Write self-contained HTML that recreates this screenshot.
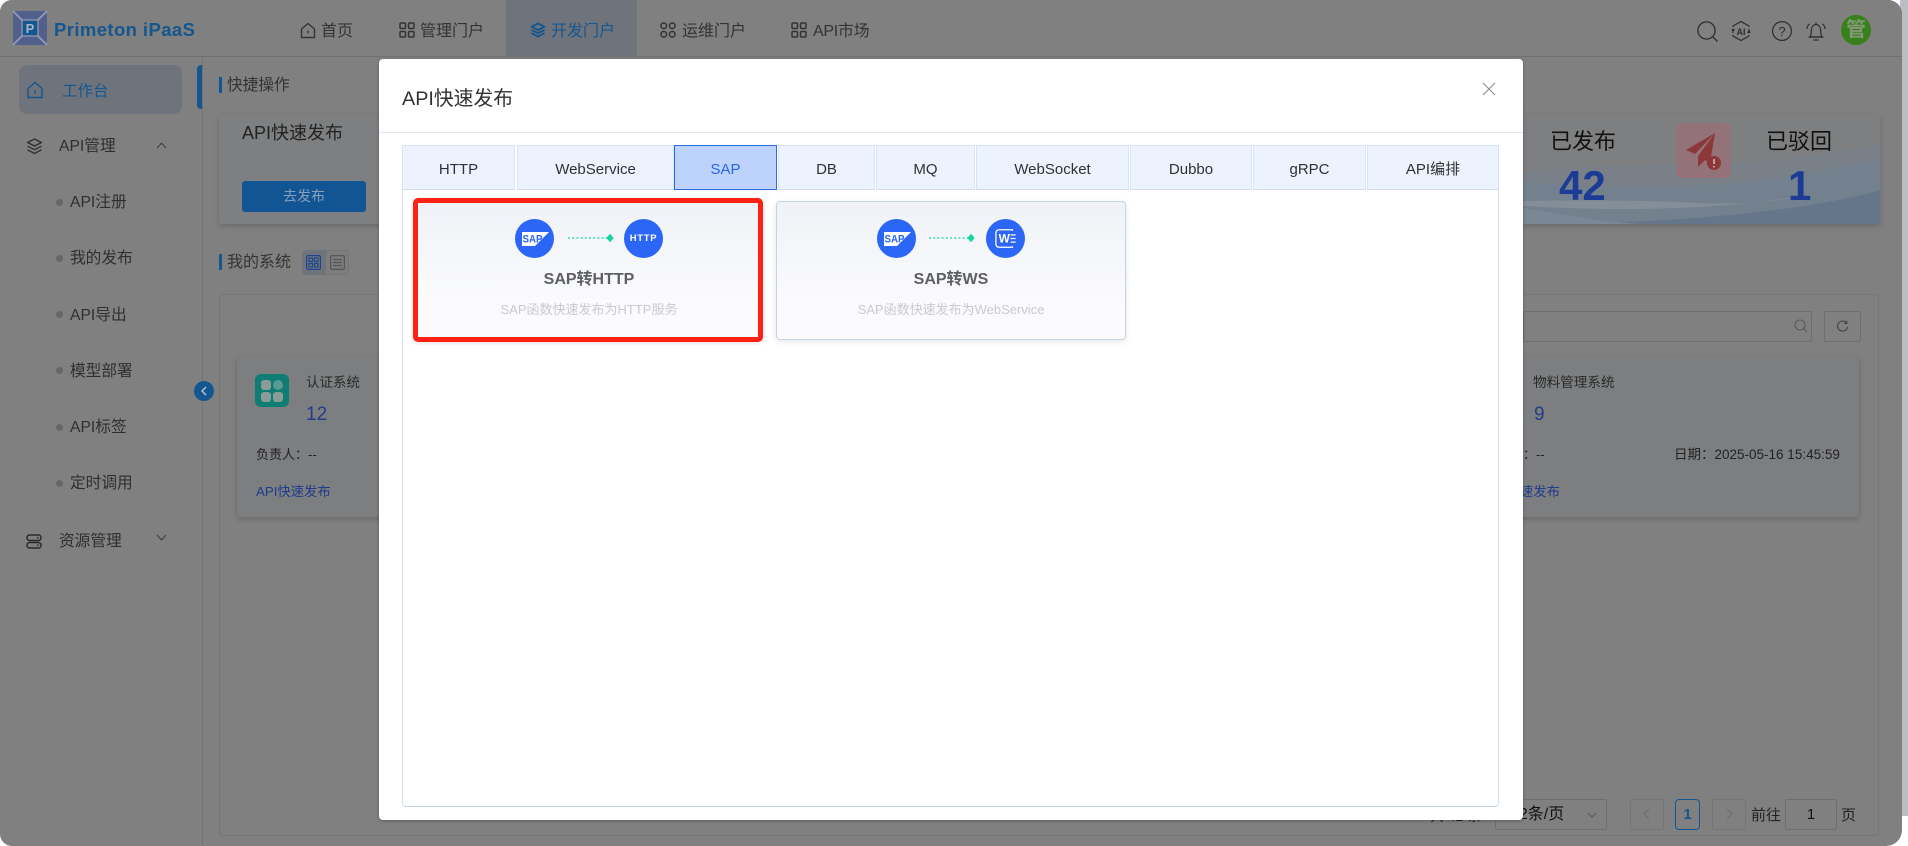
<!DOCTYPE html>
<html lang="zh">
<head>
<meta charset="utf-8">
<title>API快速发布</title>
<style>
*{box-sizing:border-box}
html,body{margin:0;padding:0;width:1908px;height:846px;overflow:hidden;background:#fff;font-family:"Liberation Sans","Noto Sans CJK SC",sans-serif}
.strip{position:absolute;left:1900px;top:0;width:8px;height:816px;background:#bcbcc4}
#win{position:absolute;left:0;top:0;width:1902px;height:846px;background:#808080;border-radius:12px 14px 16px 12px;overflow:hidden;color:#2c2c2c}
.t{position:absolute;white-space:nowrap;line-height:20px}
.b{position:absolute}
svg{position:absolute;overflow:visible}
.nav{font-size:16px;color:#333;top:22px}
.side{font-size:15.7px;color:#2f2f2f}
.dot{position:absolute;left:56px;width:7px;height:7px;border-radius:50%;background:#666}
#modal{position:absolute;left:379px;top:59px;width:1144px;height:761px;background:#fff;border-radius:4px;box-shadow:0 1px 3px rgba(0,0,0,.3);color:#303133}
.tab{position:absolute;top:86px;height:45px;background:#ecf3fe;border:1px solid #d8e3f3;border-bottom:1px solid #d0dcee;font-size:15px;line-height:47px;text-align:center;color:#303133}
.card{position:absolute;background:linear-gradient(#eff2f7,#fbfbfd 75%);border-radius:4px}
.circle{position:absolute;width:39px;height:39px;border-radius:50%;background:#2b66f6}
</style>
</head>
<body>
<div class="strip"></div>
<div id="win">
  <!-- header -->
  <div class="b" style="left:0;top:0;width:1902px;height:57px;background:#7f807f;border-bottom:1px solid #6f7070"></div>
  <svg style="left:13px;top:11px" width="34" height="34" viewBox="0 0 34 34">
    <rect x="0" y="0" width="34" height="34" rx="3" fill="#505f8c"/>
    <path d="M0 0L10 10M34 0L24 10M0 34L10 24M34 34L24 24" stroke="#8d96ad" stroke-width="2"/>
    <rect x="9" y="9" width="16" height="16" fill="#14568f"/>
    <rect x="9" y="9" width="16" height="16" fill="none" stroke="#8d96ad" stroke-width="1.4"/>
    <text x="17" y="22" font-size="13" font-weight="700" text-anchor="middle" fill="#a9b4c6" font-family="Liberation Sans">P</text>
  </svg>
  <div class="t" style="left:54px;top:19px;font-size:18.5px;font-weight:700;color:#14568f;letter-spacing:.4px;line-height:22px">Primeton iPaaS</div>

  <div class="b" style="left:506px;top:0;width:131px;height:56px;background:#6f747c"></div>
  <svg style="left:300px;top:22px" width="16" height="17" viewBox="0 0 16 17" fill="none" stroke="#333" stroke-width="1.4"><path d="M1.5 7L8 1.5L14.5 7V15.5H1.5Z" stroke-linejoin="round"/><path d="M8 8.5V11.5"/></svg>
  <div class="t nav" style="left:321px">首页</div>
  <svg style="left:399px;top:22px" width="16" height="16" viewBox="0 0 16 16" fill="none" stroke="#333" stroke-width="1.5"><rect x="1" y="1" width="5.5" height="5.5" rx="1.2"/><rect x="9.5" y="1" width="5.5" height="5.5" rx="1.2"/><rect x="1" y="9.5" width="5.5" height="5.5" rx="1.2"/><rect x="9.5" y="9.5" width="5.5" height="5.5" rx="1.2"/></svg>
  <div class="t nav" style="left:420px">管理门户</div>
  <svg style="left:530px;top:22px" width="16" height="16" viewBox="0 0 16 16" fill="none" stroke="#14568f" stroke-width="1.9"><path d="M8 1.5L14.5 4.7L8 8L1.5 4.7Z" stroke-linejoin="round"/><path d="M1.5 8L8 11.2L14.5 8M1.5 11.2L8 14.5L14.5 11.2"/></svg>
  <div class="t nav" style="left:551px;color:#14568f">开发门户</div>
  <svg style="left:660px;top:22px" width="16" height="16" viewBox="0 0 16 16" fill="none" stroke="#333" stroke-width="1.5"><rect x="1" y="1" width="5.5" height="5.5" rx="2.5"/><rect x="9.5" y="1" width="5.5" height="5.5" rx="2.5"/><rect x="1" y="9.5" width="5.5" height="5.5" rx="2.5"/><rect x="9.5" y="9.5" width="5.5" height="5.5" rx="2.5"/></svg>
  <div class="t nav" style="left:682px">运维门户</div>
  <svg style="left:791px;top:22px" width="16" height="16" viewBox="0 0 16 16" fill="none" stroke="#333" stroke-width="1.5"><rect x="1" y="1" width="5.5" height="5.5" rx="1.2"/><rect x="9.5" y="1" width="5.5" height="5.5" rx="1.2"/><rect x="1" y="9.5" width="5.5" height="5.5" rx="1.2"/><rect x="9.5" y="9.5" width="5.5" height="5.5" rx="1.2"/></svg>
  <div class="t nav" style="left:813px;letter-spacing:-.3px">API市场</div>

  <!-- header right icons -->
  <svg style="left:1697px;top:21px" width="22" height="22" viewBox="0 0 22 22" fill="none" stroke="#2d2d2d" stroke-width="1.3"><circle cx="9.5" cy="9.5" r="8.6"/><path d="M15.8 15.8L20.5 20.5"/></svg>
  <svg style="left:1731px;top:20px" width="20" height="22" viewBox="0 0 20 22" fill="none" stroke="#2d2d2d" stroke-width="1.2"><path d="M2 7V6L10 1.5L18 6V7M18 15V16L10 20.5L2 16V15"/><path d="M.8 9L2 11L3.4 9M16.6 13L18 11L19.2 13"/><path d="M2 9V13M18 9V13"/><text x="10" y="15" font-size="9" font-weight="700" text-anchor="middle" fill="#2d2d2d" stroke="none" font-family="Liberation Sans">AI</text></svg>
  <svg style="left:1772px;top:21px" width="20" height="20" viewBox="0 0 20 20" fill="none" stroke="#2d2d2d" stroke-width="1.2"><circle cx="10" cy="10" r="9.4"/><text x="10" y="15" font-size="13" text-anchor="middle" fill="#2d2d2d" stroke="none" font-family="Liberation Sans">?</text></svg>
  <svg style="left:1806px;top:21px" width="20" height="22" viewBox="0 0 20 22" fill="none" stroke="#2d2d2d" stroke-width="1.2"><path d="M4 16C5.5 14 5 11 5.5 8C6 5 8 3.5 10 3.5C12 3.5 14 5 14.5 8C15 11 14.5 14 16 16Z" stroke-linejoin="round"/><path d="M10 1.5V3.5M7.5 19H12.5M2.5 16H17.5M1 8C1.2 6 2 4 3.5 3M19 8C18.8 6 18 4 16.5 3"/></svg>
  <div class="b" style="left:1841px;top:15px;width:30px;height:30px;border-radius:50%;background:#38801a;color:#849878;font-size:20px;line-height:30px;text-align:center;font-weight:700">管</div>

  <!-- sidebar -->
  <div class="b" style="left:202px;top:57px;width:1px;height:789px;background:#727272"></div>
  <div class="b" style="left:19px;top:65px;width:163px;height:49px;border-radius:8px;background:#6f747c"></div>
  <div class="b" style="left:197px;top:65px;width:5px;height:44px;border-radius:4px 0 0 4px;background:#14568f"></div>
  <svg style="left:27px;top:81px" width="16" height="18" viewBox="0 0 16 18" fill="none" stroke="#14568f" stroke-width="1.4"><path d="M1 7.5L8 1.5L15 7.5V16.5H1Z" stroke-linejoin="round"/><path d="M8 9V12.5"/></svg>
  <div class="t" style="left:62px;top:82px;font-size:15.5px;color:#14568f">工作台</div>

  <svg style="left:26px;top:138px" width="17" height="17" viewBox="0 0 17 17" fill="none" stroke="#2f2f2f" stroke-width="1.3"><path d="M8.5 1L15.5 4.5L8.5 8L1.5 4.5Z" stroke-linejoin="round"/><path d="M1.5 8.2L8.5 11.7L15.5 8.2M1.5 11.8L8.5 15.5L15.5 11.8"/></svg>
  <div class="t side" style="left:59px;top:137px">API管理</div>
  <svg style="left:156px;top:142px" width="11" height="7" viewBox="0 0 11 7" fill="none" stroke="#3a3a3a"><path d="M1 6L5.5 1.2L10 6"/></svg>

  <div class="dot" style="top:199px"></div><div class="t side" style="left:70px;top:193px">API注册</div>
  <div class="dot" style="top:255px"></div><div class="t side" style="left:70px;top:249px">我的发布</div>
  <div class="dot" style="top:311px"></div><div class="t side" style="left:70px;top:306px">API导出</div>
  <div class="dot" style="top:367px"></div><div class="t side" style="left:70px;top:362px">模型部署</div>
  <div class="dot" style="top:424px"></div><div class="t side" style="left:70px;top:418px">API标签</div>
  <div class="dot" style="top:480px"></div><div class="t side" style="left:70px;top:474px">定时调用</div>

  <svg style="left:26px;top:534px" width="16" height="15" viewBox="0 0 16 15" fill="none" stroke="#2a2a2a" stroke-width="1.5"><rect x="1" y="1" width="14" height="5.5" rx="2.5"/><rect x="1" y="8.5" width="14" height="5.5" rx="2.5"/><path d="M11 3.8H12.5M11 11.2H12.5"/></svg>
  <div class="t side" style="left:59px;top:532px">资源管理</div>
  <svg style="left:156px;top:534px" width="11" height="7" viewBox="0 0 11 7" fill="none" stroke="#3a3a3a"><path d="M1 1L5.5 6L10 1"/></svg>

  <div class="b" style="left:194px;top:381px;width:20px;height:20px;border-radius:50%;background:#14568f"></div>
  <svg style="left:200px;top:386px" width="8" height="10" viewBox="0 0 8 10" fill="none" stroke="#b9c8d8" stroke-width="1.4"><path d="M6 1L2 5L6 9"/></svg>

  <!-- main -->
  <div class="b" style="left:219px;top:77px;width:3px;height:16px;background:#14568f"></div>
  <div class="t" style="left:227px;top:76px;font-size:15.7px;color:#333">快捷操作</div>

  <div class="b" style="left:219px;top:115px;width:1661px;height:109px;background:#7e7f80;box-shadow:0 2px 6px rgba(0,0,0,.18);border-radius:3px;overflow:hidden"></div>
  <svg style="left:0;top:0" width="1902" height="846">
    <defs><clipPath id="bn"><rect x="1523" y="115" width="357" height="109"/></clipPath></defs>
    <g clip-path="url(#bn)">
      <rect x="1523" y="115" width="357" height="109" fill="#7e7f80"/>
      <path d="M1523 172C1600 158 1750 176 1880 142V224H1523Z" fill="#7a8087"/>
      <path d="M1523 182C1600 186 1720 198 1880 158V224H1523Z" fill="#73808d"/>
      <path d="M1523 206C1620 212 1760 212 1880 180C1790 202 1750 205 1700 203C1640 200 1580 200 1523 201Z" fill="#838e99"/>
      <path d="M1560 224C1700 222 1820 208 1880 190V224Z" fill="#65768a"/>
      <path d="M1523 208C1560 214 1600 222 1640 224H1523Z" fill="#7a8794"/>
    </g>
  </svg>
  <div class="t" style="left:242px;top:123px;font-size:18px;color:#222">API快速发布</div>
  <div class="b" style="left:242px;top:181px;width:124px;height:31px;border-radius:3px;background:#115595;color:#8aa0b8;font-size:14px;line-height:31px;text-align:center">去发布</div>

  <div class="t" style="left:1550px;top:128px;font-size:22px;line-height:28px;color:#111">已发布</div>
  <div class="t" style="left:1559px;top:164px;font-size:42px;font-weight:700;line-height:44px;color:#1c3b94">42</div>
  <div class="b" style="left:1676px;top:123px;width:55px;height:55px;border-radius:5px;background:#94727a"></div>
  <svg style="left:1685px;top:132px" width="42" height="40" viewBox="0 0 42 40">
    <path d="M30 1L1 18L10 22L30 1L13 24L13 35L20 28L25 31Z" fill="#8c3838"/>
    <circle cx="29" cy="31" r="7" fill="#8c3838"/>
    <path d="M29 27V32M29 34V35.5" stroke="#c8a7a7" stroke-width="1.8"/>
  </svg>
  <div class="t" style="left:1766px;top:128px;font-size:22px;line-height:28px;color:#111">已驳回</div>
  <div class="t" style="left:1788px;top:164px;font-size:42px;font-weight:700;line-height:44px;color:#1c3b94">1</div>

  <div class="b" style="left:219px;top:254px;width:3px;height:16px;background:#14568f"></div>
  <div class="t" style="left:227px;top:253px;font-size:16px;color:#333">我的系统</div>
  <div class="b" style="left:302px;top:250px;width:47px;height:25px;border-radius:4px;border:1px solid #757575;background:#7d7d7d"></div>
  <div class="b" style="left:302px;top:250px;width:24px;height:25px;border-radius:4px 0 0 4px;background:#6f747c"></div>
  <svg style="left:306px;top:255px" width="15" height="15" viewBox="0 0 15 15" fill="none" stroke="#1c4590" stroke-width="1.2"><rect x=".6" y=".6" width="13.8" height="13.8" rx="1.5"/><rect x="3" y="3" width="3.5" height="3.5"/><rect x="8.5" y="3" width="3.5" height="3.5"/><rect x="3" y="8.5" width="3.5" height="3.5"/><rect x="8.5" y="8.5" width="3.5" height="3.5"/></svg>
  <svg style="left:330px;top:255px" width="15" height="15" viewBox="0 0 15 15" fill="none" stroke="#555" stroke-width="1.2"><rect x=".6" y=".6" width="13.8" height="13.8" rx="1.5"/><path d="M3 4.5H12M3 7.5H12M3 10.5H12"/></svg>

  <div class="b" style="left:219px;top:294px;width:1660px;height:542px;border:1px solid #767676;border-radius:4px"></div>

  <div class="b" style="left:1523px;top:311px;width:289px;height:31px;border:1px solid #6f6f6f;border-radius:2px"></div>
  <svg style="left:1794px;top:319px" width="14" height="14" viewBox="0 0 14 14" fill="none" stroke="#5a5a5a" stroke-width="1.1"><circle cx="6" cy="6" r="5"/><path d="M10 10L13 13"/></svg>
  <div class="b" style="left:1824px;top:311px;width:37px;height:31px;border:1px solid #6f6f6f;border-radius:2px"></div>
  <svg style="left:1836px;top:320px" width="13" height="13" viewBox="0 0 13 13" fill="none" stroke="#444" stroke-width="1.1"><path d="M10.5 3A5 5 0 1 0 11.5 7"/><path d="M10.8 .8V3.4H8.2"/></svg>

  <!-- system cards -->
  <div class="b" style="left:237px;top:356px;width:1622px;height:161px;background:#7c7e80;border-radius:3px;box-shadow:0 2px 6px rgba(0,0,0,.2)"></div>
  <div class="b" style="left:255px;top:374px;width:34px;height:33px;border-radius:6px;background:#0f7d74"></div>
  <svg style="left:255px;top:374px" width="34" height="33" viewBox="0 0 34 33"><rect x="6" y="6" width="10" height="10" rx="3" fill="#8a9c9a"/><circle cx="23" cy="11" r="5" fill="#5a9a94"/><rect x="6" y="18" width="10" height="10" rx="3" fill="#8a9c9a"/><rect x="18" y="18" width="10" height="10" rx="3" fill="#8a9c9a"/></svg>
  <div class="t" style="left:306px;top:373px;font-size:13.5px;color:#2a2a2a">认证系统</div>
  <div class="t" style="left:306px;top:405px;font-size:19px;color:#223b8a">12</div>
  <div class="t" style="left:256px;top:445px;font-size:13px;color:#222">负责人：--</div>
  <div class="t" style="left:256px;top:482px;font-size:13.3px;color:#1e3b8c">API快速发布</div>

  <div class="t" style="left:1533px;top:373px;font-size:13.6px;color:#2a2a2a">物料管理系统</div>
  <div class="t" style="left:1534px;top:405px;font-size:19px;color:#223b8a">9</div>
  <div class="t" style="left:1523px;top:445px;font-size:13px;color:#222">：--</div>
  <div class="t" style="left:1674px;top:445px;font-size:13.5px;color:#222">日期：2025-05-16 15:45:59</div>
  <div class="t" style="left:1520px;top:482px;font-size:13.3px;color:#1e3b8c">速发布</div>

  <!-- pagination -->
  <div class="t" style="left:1430px;top:806px;font-size:14px;color:#222">共 42 条</div>
  <div class="b" style="left:1495px;top:799px;width:112px;height:31px;border:1px solid #6f6f6f;border-radius:2px"></div>
  <div class="t" style="left:1510px;top:805px;font-size:16px;color:#111">12条/页</div>
  <svg style="left:1587px;top:812px" width="10" height="6" viewBox="0 0 10 6" fill="none" stroke="#555"><path d="M1 1L5 5L9 1"/></svg>
  <div class="b" style="left:1630px;top:799px;width:34px;height:31px;border:1px solid #757575;border-radius:2px"></div>
  <svg style="left:1643px;top:808px" width="7" height="12" viewBox="0 0 7 12" fill="none" stroke="#6c6c6c"><path d="M6 1L1 6L6 11"/></svg>
  <div class="b" style="left:1675px;top:799px;width:25px;height:31px;border:1px solid #14568f;border-radius:4px;color:#14568f;font-size:15px;font-weight:700;line-height:29px;text-align:center">1</div>
  <div class="b" style="left:1712px;top:799px;width:34px;height:31px;border:1px solid #757575;border-radius:2px"></div>
  <svg style="left:1726px;top:808px" width="7" height="12" viewBox="0 0 7 12" fill="none" stroke="#6c6c6c"><path d="M1 1L6 6L1 11"/></svg>
  <div class="t" style="left:1751px;top:806px;font-size:15px;color:#222">前往</div>
  <div class="b" style="left:1785px;top:799px;width:52px;height:31px;border:1px solid #6f6f6f;border-radius:2px;font-size:15px;line-height:29px;text-align:center;color:#111">1</div>
  <div class="t" style="left:1841px;top:806px;font-size:15px;color:#222">页</div>

  <!-- modal -->
  <div id="modal">
    <div class="t" style="left:23px;top:29px;font-size:19.8px;line-height:22px;color:#303133">API快速发布</div>
    <svg style="left:1103px;top:23px" width="14" height="14" viewBox="0 0 14 14" fill="none" stroke="#909399" stroke-width="1.2"><path d="M1 1L13 13M13 1L1 13"/></svg>
    <div class="b" style="left:0;top:73px;width:1144px;height:1px;background:#e6e8ee"></div>

    <div class="b" style="left:23px;top:131px;width:1097px;height:617px;border:1px solid #d3deee;border-top:0;border-bottom:1px solid #c5d1e4;border-radius:0 0 4px 4px"></div>

    <div class="tab" style="left:23px;width:113px">HTTP</div>
    <div class="tab" style="left:138px;width:157px">WebService</div>
    <div class="tab" style="left:295px;width:103px;background:#bed3fc;border:1px solid #2f6be0;color:#2b64ee">SAP</div>
    <div class="tab" style="left:399px;width:97px">DB</div>
    <div class="tab" style="left:497px;width:99px">MQ</div>
    <div class="tab" style="left:597px;width:153px">WebSocket</div>
    <div class="tab" style="left:751px;width:122px">Dubbo</div>
    <div class="tab" style="left:874px;width:113px">gRPC</div>
    <div class="tab" style="left:988px;width:132px">API编排</div>

    <!-- card 1 -->
    <div class="card" style="left:34px;top:139px;width:350px;height:144px;border:5px solid #ff2214;border-radius:5px;box-shadow:0 1px 5px rgba(0,0,0,.12)"></div>
    <div class="circle" style="left:136px;top:159.5px"></div>
    <svg style="left:142.5px;top:173px" width="27" height="14" viewBox="0 0 27 14"><path d="M0 0H27L13 14H0Z" fill="#fff"/><text x="0.5" y="10.5" font-size="11" font-weight="700" fill="#2b66f6" font-family="Liberation Sans" textLength="20" lengthAdjust="spacingAndGlyphs">SAP</text></svg>
    <svg style="left:189px;top:174px" width="46" height="10" viewBox="0 0 46 10"><path d="M0 5H41" stroke="#10d6a2" stroke-width="1.2" stroke-dasharray="2 2.2"/><path d="M42 1.5L45 5L42 8.5L39 5Z" fill="#10d6a2" stroke="#10d6a2"/></svg>
    <div class="circle" style="left:245px;top:159.5px"></div>
    <div class="t" style="left:245px;top:169.5px;width:39px;text-align:center;font-size:9.5px;font-weight:700;color:#fff;letter-spacing:.7px">HTTP</div>
    <div class="t" style="left:34px;top:211px;width:352px;text-align:center;font-size:16px;font-weight:700;color:#5d5f63">SAP转HTTP</div>
    <div class="t" style="left:34px;top:241px;width:352px;text-align:center;font-size:13px;color:#c8cad0">SAP函数快速发布为HTTP服务</div>

    <!-- card 2 -->
    <div class="card" style="left:397px;top:142px;width:350px;height:139px;border:1px solid #c5d3e6;box-shadow:0 2px 6px rgba(0,0,0,.1)"></div>
    <div class="circle" style="left:498px;top:159.5px"></div>
    <svg style="left:504.5px;top:173px" width="27" height="14" viewBox="0 0 27 14"><path d="M0 0H27L13 14H0Z" fill="#fff"/><text x="0.5" y="10.5" font-size="11" font-weight="700" fill="#2b66f6" font-family="Liberation Sans" textLength="20" lengthAdjust="spacingAndGlyphs">SAP</text></svg>
    <svg style="left:550px;top:174px" width="46" height="10" viewBox="0 0 46 10"><path d="M0 5H41" stroke="#10d6a2" stroke-width="1.2" stroke-dasharray="2 2.2"/><path d="M42 1.5L45 5L42 8.5L39 5Z" fill="#10d6a2" stroke="#10d6a2"/></svg>
    <div class="circle" style="left:606.5px;top:159.5px"></div>
    <svg style="left:616px;top:169px" width="22" height="21" viewBox="0 0 24 22" fill="none" stroke="#fff" stroke-width="1.4"><path d="M19 2.5V1.5H5Q1 1.5 1 5V17Q1 20.5 5 20.5H19V19.5"/><text x="4" y="15.5" font-size="13" font-weight="700" fill="#fff" stroke="none" font-family="Liberation Sans">W</text><path d="M17 7H22.5M17 11H22.5M17 15H22.5"/></svg>
    <div class="t" style="left:397px;top:211px;width:350px;text-align:center;font-size:16px;font-weight:700;color:#5d5f63">SAP转WS</div>
    <div class="t" style="left:397px;top:241px;width:350px;text-align:center;font-size:13px;color:#c8cad0">SAP函数快速发布为WebService</div>
  </div>
</div>
</body>
</html>
